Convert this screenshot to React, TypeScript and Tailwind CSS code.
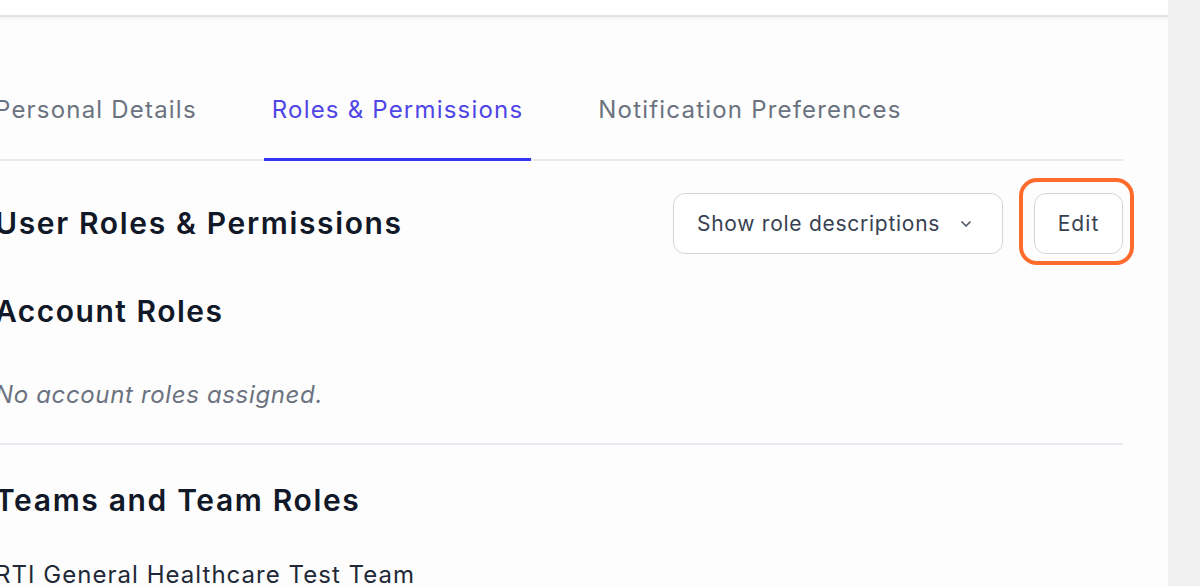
import React from 'react';
import { ChevronDown } from 'lucide-react';

const tabs = ['Personal Details', 'Roles & Permissions', 'Notification Preferences'];

const App: React.FC = () => {
  const active = 1;

  return (
    <div className="w-[1200px] h-[586px] flex overflow-hidden font-['Inter',sans-serif]">
      <div className="w-[1168px] shrink-0 flex flex-col bg-[#fdfdfd]">
        <div className="h-[17px] shrink-0 bg-white border-b-2 border-[#e2e2e2] shadow-[0_2px_4px_rgba(0,0,0,0.05)]" />

        <div className="ml-[-13px] w-[1136px] pt-[75px]">
          {/* tabs */}
          <div className="flex gap-[59px] border-b-2 border-[#e8e8ee]">
            {tabs.map((t, i) => (
              <div
                key={t}
                className={
                  i === active
                    ? 'px-2 pb-[30px] -mb-[2px] border-b-[3px] border-[#3535f3] text-[24px] leading-[36px] tracking-[0.05em] text-[#4f46e5]'
                    : 'px-2 pb-[30px] -mb-[2px] border-b-[3px] border-transparent text-[24px] leading-[36px] tracking-[0.05em] text-[#6b7280]'
                }
              >
                {t}
              </div>
            ))}
          </div>

          {/* header row */}
          <div className="mt-[32px] flex items-center justify-between pl-[8px]">
            <h2 className="text-[30px] leading-[45px] font-semibold tracking-[0.055em] text-[#111827]">User Roles &amp; Permissions</h2>
            <div className="flex items-center gap-[31px]">
              <button className="h-[61px] w-[330px] flex items-center justify-between pl-[23px] pr-[28px] rounded-[12px] border-[1.5px] border-[#d1d5db] bg-white text-[21px] tracking-[0.035em] text-[#374151]">
                <span>Show role descriptions</span>
                <ChevronDown size={16} strokeWidth={2.5} className="text-[#4b5563]" />
              </button>
              <div className="relative">
                <span className="absolute -top-[15px] -left-[15px] -right-[11px] -bottom-[11px] rounded-[18px] border-[4px] border-[#ff6b2c]" />
                <button className="h-[61px] w-[89px] flex items-center justify-center rounded-[12px] border-[1.5px] border-[#d1d5db] bg-white text-[21px] tracking-[0.05em] text-[#374151]">
                  Edit
                </button>
              </div>
            </div>
          </div>

          {/* account roles */}
          <div className="pl-[8px]">
            <h3 className="mt-[35px] text-[30px] leading-[45px] font-semibold tracking-[0.05em] text-[#111827]">Account Roles</h3>
            <p className="mt-[43px] text-[24px] leading-[36px] italic tracking-[0.027em] text-[#6b7280]">No account roles assigned.</p>
          </div>

          <div className="mt-[30px] h-[2px] bg-[#e8e8ee]" />

          {/* teams */}
          <div className="pl-[8px]">
            <h3 className="mt-[33px] text-[30px] leading-[45px] font-semibold tracking-[0.055em] text-[#111827]">Teams and Team Roles</h3>
            <p className="mt-[34px] text-[24px] leading-[36px] tracking-[0.043em] text-[#1f2937]">RTI General Healthcare Test Team</p>
          </div>
        </div>
      </div>
      <div className="flex-1 bg-[#f0f0f0]" />
    </div>
  );
};

export default App;
